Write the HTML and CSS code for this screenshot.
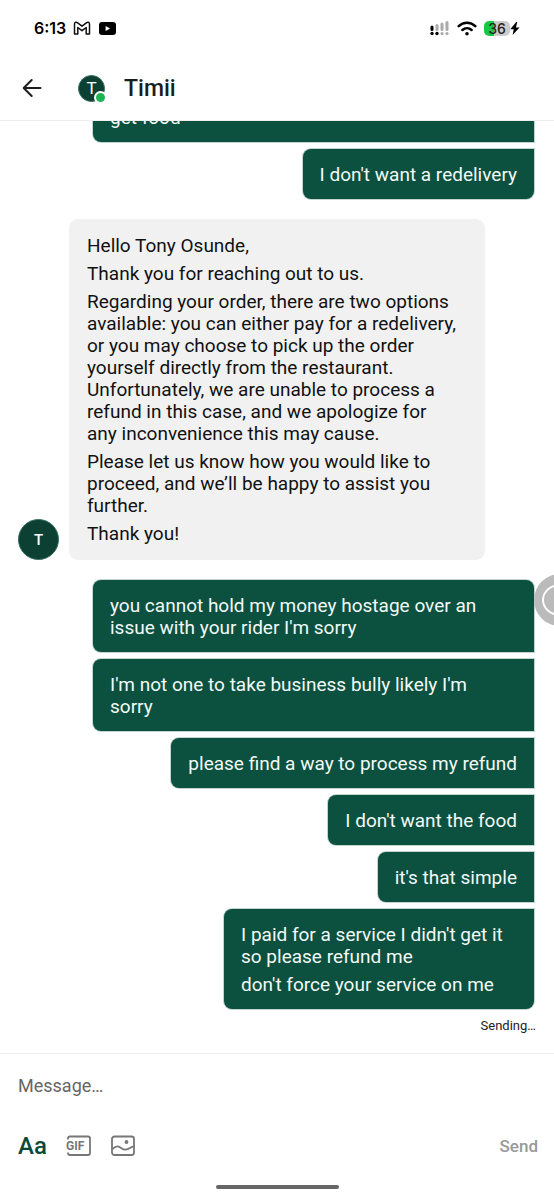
FILE: index.html
```html
<!DOCTYPE html>
<html lang="en">
<head>
<meta charset="utf-8">
<meta name="viewport" content="width=device-width, initial-scale=1">
<title>Timii</title>
<link rel="stylesheet" href="styles.css">
</head>
<body>
<div class="app">
  <div class="status">
    <span class="clock">6:13</span>
    <svg class="status-mail" width="18" height="14" viewBox="0 0 18 14" fill="none" stroke="#111" stroke-width="1.5" stroke-linejoin="round"><path d="M1.500 3C1.500 1 3.300.8 4.300 1.600L9 5.200l4.700-3.600c1-.8 2.800-.6 2.800 1.400V13h-3.300V6.500L9 9.700 4.800 6.500V13H1.500z"/></svg>
    <svg class="status-video" width="17" height="13" viewBox="0 0 17 13"><rect width="17" height="13" rx="3" fill="#000"/><path d="M6.600 4v5l4.400-2.500z" fill="#fff"/></svg>
    <span class="spacer"></span>
    <svg width="20" height="15" viewBox="0 0 20 15"><g fill="#aaa"><rect x="5.500" y="3" width="3" height="7" rx="1.500"/><rect x="10.500" y="1.500" width="3" height="8.500" rx="1.500"/><rect x="15.500" y="0" width="3" height="10" rx="1.500"/><circle cx="12" cy="12.500" r="1.600"/><circle cx="17" cy="12.500" r="1.600"/></g><g fill="#000"><rect x=".5" y="4.500" width="3" height="5.500" rx="1.500"/><circle cx="2" cy="12.500" r="1.700"/><circle cx="7" cy="12.500" r="1.700"/></g></svg>
    <svg class="status-wifi" width="20" height="15" viewBox="0 0 20 15" fill="none" stroke="#000" stroke-width="2.500" stroke-linecap="round"><path d="M1.700 5.200c4.700-4.600 11.900-4.600 16.600 0M5.400 9c2.700-2.500 6.500-2.500 9.200 0"/><circle cx="10" cy="12.700" r="1.800" fill="#000" stroke="none"/></svg>
    <span class="battery">36</span>
    <svg width="10" height="13" viewBox="0 0 10 13"><path d="M6.200 0 .3 7.200h3.400L2.600 13l7-7.600H6L7.200 0z" fill="#000"/></svg>
  </div>

  <header class="header">
    <button class="back" type="button" aria-label="Back"><svg width="20" height="20" viewBox="0 0 20 20" fill="none" stroke="#1d1d1d" stroke-width="2" stroke-linecap="round" stroke-linejoin="round"><path d="M18.500 10H2M9.700 2 1.700 10l8 8"/></svg></button>
    <div class="avatar avatar-small">T<span class="online"></span></div>
    <h1 class="title">Timii</h1>
  </header>

  <main class="chat">
    <div class="sent">
      <div class="bubble bubble-out wide"><p>get food</p></div>
      <div class="bubble bubble-out last"><p>I don't want a redelivery</p></div>
    </div>
    <div class="received">
      <div class="avatar">T</div>
      <div class="bubble bubble-in">
        <p>Hello Tony Osunde,</p>
        <p>Thank you for reaching out to us.</p>
        <p>Regarding your order, there are two options<br>available: you can either pay for a redelivery,<br>or you may choose to pick up the order<br>yourself directly from the restaurant.<br>Unfortunately, we are unable to process a<br>refund in this case, and we apologize for<br>any inconvenience this may cause.</p>
        <p>Please let us know how you would like to<br>proceed, and we’ll be happy to assist you<br>further.</p>
        <p>Thank you!</p>
      </div>
    </div>
    <div class="sent">
      <div class="bubble bubble-out wide first"><p>you cannot hold my money hostage over an<br>issue with your rider I'm sorry</p></div>
      <div class="bubble bubble-out wide"><p>I'm not one to take business bully likely I'm<br>sorry</p></div>
      <div class="bubble bubble-out"><p>please find a way to process my refund</p></div>
      <div class="bubble bubble-out"><p>I don't want the food</p></div>
      <div class="bubble bubble-out"><p>it's that simple</p></div>
      <div class="bubble bubble-out medium last"><p>I paid for a service I didn't get it<br>so please refund me</p><p>don't force your service on me</p></div>
    </div>
    <div class="state">Sending…</div>
  </main>

  <form class="composer">
    <input class="message" type="text" placeholder="Message…" aria-label="Message">
    <div class="tools">
      <button class="tool tool-text" type="button" aria-label="Text">Aa</button>
      <button class="tool" type="button" aria-label="GIF"><svg width="26" height="22" viewBox="0 0 26 22"><path d="M2 4.500V3.500Q2 1.500 4 1.500H22Q24 1.500 24 3.500V18Q24 20 22 20H4Q2 20 2 18V17.500" fill="none" stroke="#777" stroke-width="1.800"/><text class="gif-text" x="0" y="15">GIF</text></svg></button>
      <button class="tool" type="button" aria-label="Picture"><svg width="24" height="22" viewBox="0 0 24 22" fill="none" stroke="#777" stroke-width="1.800"><rect x="1" y="1.500" width="22" height="18.500" rx="2.500"/><path d="M1.500 14c4-3.500 6-3 9-.8 3.200 2.300 5.500 1.800 8.500-.2 1.600-1.200 2.500-1.500 4-1.500"/><circle cx="15.500" cy="7" r="1.900" fill="#777" stroke="none"/></svg></button>
      <button class="send" type="submit">Send</button>
    </div>
  </form>
  <div class="home"><span class="home-bar"></span></div>
  <div class="floating"></div>
</div>
</body>
</html>
```
FILE: styles.css
```css
* { box-sizing: border-box; }
body { margin: 0; background: #fff; color: #111; font-family: Roboto, "Liberation Sans", sans-serif; }
button { padding: 0; border: 0; background: none; font-family: inherit; }
p, h1 { margin: 0; }
svg { display: block; flex: none; }

.app { position: relative; display: flex; flex-direction: column; height: 100vh; overflow: hidden; }

.status { display: flex; align-items: center; height: 56px; padding: 0 34px; flex: none; }
.clock { font: 600 16px/20px Inter, Roboto, sans-serif; color: #000; }
.status-mail { margin-left: 7px; }
.status-video { margin-left: 8px; }
.spacer { flex: 1; }
.status-wifi { margin: 0 7px; }
.battery { width: 26px; height: 15px; border-radius: 5px; background: linear-gradient(90deg, #19c745 0 10px, #ccc 10px); font: 500 14px/15px Inter, Roboto, sans-serif; text-align: center; color: #222; }

.header { display: flex; align-items: center; height: 65px; padding: 0 22px; border-bottom: 1px solid #eee; flex: none; }
.back { width: 20px; height: 20px; margin-right: 36px; }
.avatar { display: flex; align-items: center; justify-content: center; width: 41px; height: 41px; border-radius: 50%; background: #0b4033; border: 1px solid #39705f; color: #fff; font-size: 15px; font-weight: 500; flex: none; }
.avatar-small { position: relative; width: 27px; height: 27px; font-size: 17px; font-weight: 400; }
.online { position: absolute; right: -3px; bottom: -3px; width: 13px; height: 13px; border-radius: 50%; background: #20b354; border: 2px solid #fff; }
.title { margin-left: 19px; padding-top: 2px; font-size: 23px; line-height: 28px; font-weight: 500; color: #1c1c1c; }

.chat { flex: 1; min-height: 0; overflow: hidden; display: flex; flex-direction: column; justify-content: flex-end; gap: 20px; padding: 0 20px 18px 18px; }
.sent { display: flex; flex-direction: column; align-items: flex-end; gap: 7px; padding-left: 75px; flex: none; }
.received { display: flex; align-items: flex-end; gap: 10px; flex: none; }
.bubble { display: flex; flex-direction: column; gap: 6px; font-size: 19px; line-height: 22px; }
.bubble-in { width: 416px; padding: 16px 18px 15px; border-radius: 9px; background: #f1f1f1; }
.bubble-out { padding: 15px 17px 13px; border-radius: 8px 0 0 8px; background: #0c503f; box-shadow: 0 0 0 1px #c3d3ce; color: #f2faf7; }
.bubble-out.first { border-top-right-radius: 8px; }
.bubble-out.last { border-bottom-right-radius: 8px; }
.wide { width: 100%; }
.medium { width: 310px; }
.state { margin: -12px -2px 0 0; text-align: right; font-size: 13px; line-height: 18px; color: #222; flex: none; }

.composer { border-top: 1px solid #eee; padding: 16px 16px 0 18px; flex: none; }
.message { display: block; width: 100%; height: 32px; padding: 0; border: 0; outline: 0; background: none; font: 18px/32px Roboto, "Liberation Sans", sans-serif; }
.message::placeholder { color: #666; opacity: 1; }
.tools { display: flex; align-items: center; gap: 19px; height: 32px; margin-top: 28px; }
.tool-text { font-size: 24px; line-height: 32px; font-weight: 500; color: #0b4a3a; }
.gif-text { font: 700 12px Roboto, sans-serif; fill: #777; }
.send { margin-left: auto; font-size: 17px; line-height: 24px; font-weight: 500; color: #999; }
.home { display: flex; justify-content: center; padding: 23px 0 11px; flex: none; }
.home-bar { width: 123px; height: 4px; border-radius: 2px; background: #666; }

.floating { position: absolute; top: 574px; right: -32px; width: 52px; height: 52px; border-radius: 50%; background: #bbb; }
.floating::after { content: ""; position: absolute; inset: 10px 8px; border: 2px solid #fff; border-radius: 50%; }
```
